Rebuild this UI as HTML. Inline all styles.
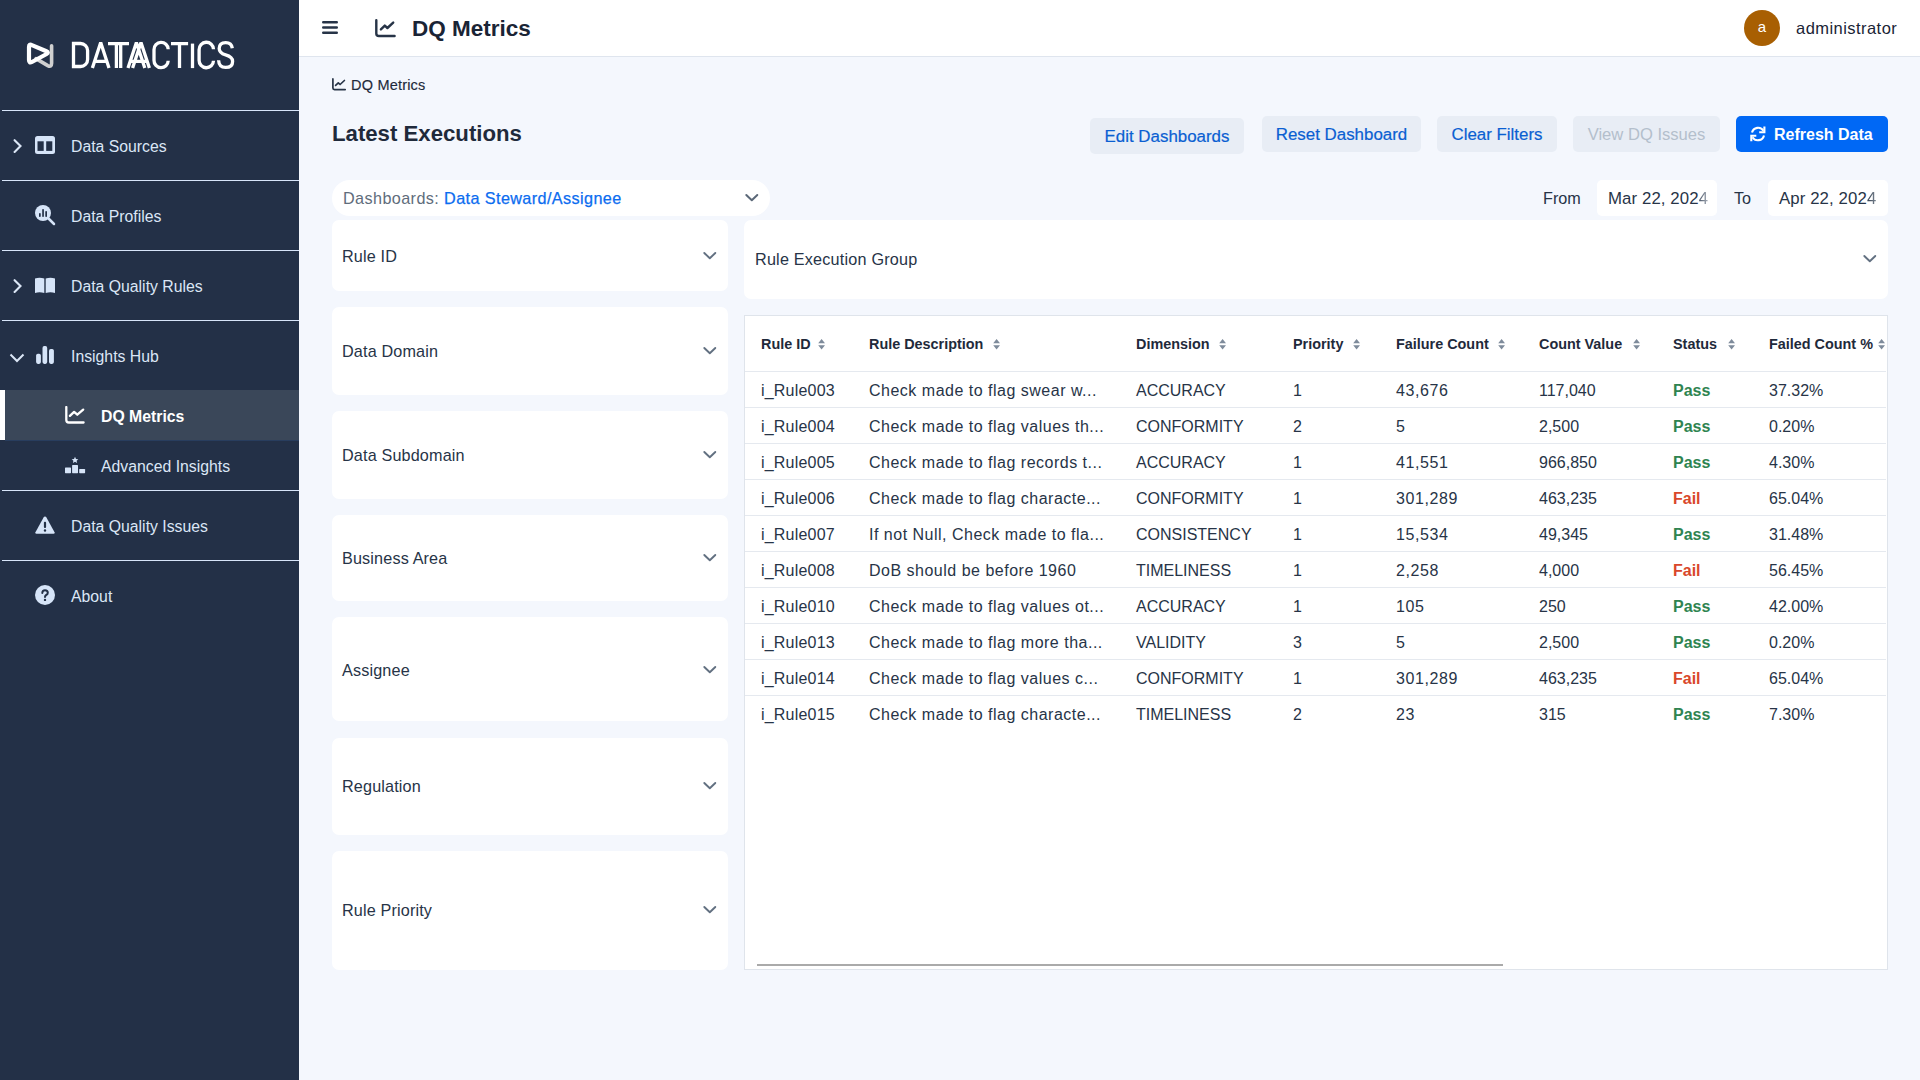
<!DOCTYPE html>
<html><head><meta charset="utf-8">
<style>
*{box-sizing:border-box;margin:0;padding:0}
html,body{width:1920px;height:1080px;overflow:hidden}
body{font-family:"Liberation Sans",sans-serif;background:#f4f7fd;color:#1e293b;position:relative}
.abs{position:absolute}
#side{position:absolute;left:0;top:0;width:299px;height:1080px;background:#233047}
.hr{position:absolute;left:2px;width:297px;height:1px;background:#d8e5fa}
.nav{position:absolute;left:71px;color:#dbe6f6;font-size:15.8px;white-space:nowrap;line-height:20px}
.ico{position:absolute}
#hdr{position:absolute;left:299px;top:0;width:1621px;height:57px;background:#fff;border-bottom:1px solid #dfe5ee}
.btn{position:absolute;height:36px;border-radius:5px;background:#e8edf5;color:#0a5fd2;font-size:16.9px;line-height:38px;-webkit-text-stroke:0.2px;text-align:center;white-space:nowrap}
.panel{position:absolute;background:#fff;border-radius:7px}
.plabel{position:absolute;left:10px;font-size:16px;color:#273447;white-space:nowrap;line-height:20px}
.chev{position:absolute}
.th{position:absolute;top:336px;font-size:14.4px;font-weight:700;color:#1f2a3b;white-space:nowrap;line-height:16px}
.td{position:absolute;font-size:16px;color:#273447;white-space:nowrap;line-height:20px}
.rowline{position:absolute;left:745px;width:1141px;height:1px;background:#e5e9ef}
</style></head><body>
<div id="side">
  <!-- logo -->
  <svg class="ico" style="left:20px;top:35px" width="40" height="36" viewBox="0 0 40 36">
    <path d="M31.6 10.8 V28.3 Q31.6 32.6 27.8 30.6 L16 23.6" fill="none" stroke="#d0d0d0" stroke-width="3.6" stroke-linecap="round" stroke-linejoin="round"/>
    <path d="M9 25 V12 Q9 8.6 11.9 10.1 L26.4 16.3 Q29.2 17.5 26.6 19 L11.9 27 Q9 28.6 9 25 Z" fill="none" stroke="#fff" stroke-width="4.2" stroke-linejoin="round"/>
  </svg>
  <svg class="ico" style="left:66px;top:36px" width="172" height="36" viewBox="0 0 172 36" fill="none" stroke="#fff" stroke-width="3.3" stroke-linejoin="bevel">
    <path stroke-linejoin="miter" d="M7.5 7.5 H14.6 A7 7 0 0 1 21.6 14.5 V23.5 A7 7 0 0 1 14.6 30.5 H7.5 Z"/>
    <path d="M26.4 32.1 L34.7 6.6 L43 32.1 M29.3 25.3 H40"/>
    <path d="M42 7.6 H63 M50.4 7.6 V32.1 M54.7 7.6 V32.1"/>
    <path d="M62 32.1 L70.4 6.6 L78.8 32.1 M66.6 32.1 L75 6.6 L83.4 32.1 M65 25.3 H80"/>
    <path d="M102.2 13.2 A7.1 7.1 0 0 0 88 13.7 V24.3 A7.1 7.1 0 0 0 102.2 24.8"/>
    <path d="M105 7.7 H122.1 M113.5 7.7 V32.1"/>
    <path d="M126.5 7.6 V32.1"/>
    <path d="M147.5 13.2 A7.2 7.2 0 0 0 133.1 13.7 V24.3 A7.2 7.2 0 0 0 147.5 24.8"/>
    <path d="M166.3 12.3 Q165.6 6.6 159.7 6.6 Q153.2 6.6 153.2 12.6 Q153.2 17.2 159.6 18.9 Q166.6 20.8 166.6 25.4 Q166.6 31.4 159.6 31.4 Q152.9 31.4 152.6 24.3"/>
  </svg>
  <div class="hr" style="top:110px"></div>
  <div class="hr" style="top:180px"></div>
  <div class="hr" style="top:250px"></div>
  <div class="hr" style="top:320px"></div>
  <div class="hr" style="top:490px"></div>
  <div class="hr" style="top:560px"></div>

  <!-- Data Sources -->
  <svg class="ico" style="left:12px;top:139px" width="12" height="16" viewBox="0 0 12 16"><path d="M2.6 1.2 L8.5 7.1 L2.6 13" fill="none" stroke="#dbe6f6" stroke-width="2.1" stroke-linecap="round"/></svg>
  <svg class="ico" style="left:35px;top:136px" width="20" height="18" viewBox="0 0 20 18"><rect x="0" y="0" width="20" height="18" rx="2.5" fill="#d6e4f8"/><rect x="2.5" y="5.3" width="6.2" height="9.6" fill="#233047"/><rect x="11.2" y="5.3" width="6.1" height="9.6" fill="#233047"/></svg>
  <div class="nav" style="top:137px">Data Sources</div>

  <!-- Data Profiles -->
  <svg class="ico" style="left:34px;top:204px" width="22" height="22" viewBox="0 0 22 22"><circle cx="9" cy="9" r="8" fill="#d6e4f8"/><path d="M14.5 14.5 L20 20" stroke="#d6e4f8" stroke-width="2.5" stroke-linecap="round"/><rect x="5" y="9" width="1.7" height="4" rx="0.8" fill="#233047"/><rect x="8.2" y="5" width="1.7" height="8" rx="0.8" fill="#233047"/><rect x="11.3" y="7" width="1.7" height="6" rx="0.8" fill="#233047"/></svg>
  <div class="nav" style="top:207px">Data Profiles</div>

  <!-- Data Quality Rules -->
  <svg class="ico" style="left:12px;top:279px" width="12" height="16" viewBox="0 0 12 16"><path d="M2.6 1.2 L8.5 7.1 L2.6 13" fill="none" stroke="#dbe6f6" stroke-width="2.1" stroke-linecap="round"/></svg>
  <svg class="ico" style="left:35px;top:277px" width="20" height="17" viewBox="0 0 20 17"><path d="M0 1.5 Q4.5 0 9.3 1.5 L9.3 16 Q4.5 14.5 0 16 Z" fill="#d6e4f8"/><path d="M10.7 1.5 Q15.5 0 20 1.5 L20 16 Q15.5 14.5 10.7 16 Z" fill="#d6e4f8"/></svg>
  <div class="nav" style="top:277px">Data Quality Rules</div>

  <!-- Insights Hub -->
  <svg class="ico" style="left:9px;top:352px" width="16" height="12" viewBox="0 0 16 12"><path d="M1.5 2.5 L8 9 L14.5 2.5" fill="none" stroke="#dbe6f6" stroke-width="2"/></svg>
  <svg class="ico" style="left:36px;top:346px" width="18" height="18" viewBox="0 0 18 18"><rect x="0.1" y="7.8" width="4.8" height="10.1" rx="1.8" fill="#d6e4f8"/><rect x="6.5" y="0.1" width="4.7" height="17.8" rx="1.8" fill="#d6e4f8"/><rect x="13" y="2.9" width="4.9" height="15" rx="1.8" fill="#d6e4f8"/></svg>
  <div class="nav" style="top:347px">Insights Hub</div>

  <!-- DQ Metrics active -->
  <div class="abs" style="left:5px;top:390px;width:294px;height:50px;background:#3a4759"></div>
  <div class="abs" style="left:0;top:390px;width:5px;height:50px;background:#fff"></div>
  <div class="abs" style="left:5px;top:440px;width:294px;height:1px;background:#283d5e"></div>
  <svg class="ico" style="left:65px;top:406px" width="21" height="19" viewBox="0 0 21 19"><path d="M1.3 1.1 V14 Q1.3 16.5 3.8 16.5 H18.6" fill="none" stroke="#fff" stroke-width="2.3" stroke-linecap="round"/><path d="M4.9 9.9 L9.1 5.9 L12.3 8.7 L18.2 3.6" fill="none" stroke="#fff" stroke-width="2.3" stroke-linecap="round" stroke-linejoin="round"/></svg>
  <div class="nav" style="left:101px;top:407px;color:#fff;font-weight:700">DQ Metrics</div>

  <!-- Advanced Insights -->
  <svg class="ico" style="left:65px;top:456px" width="21" height="18" viewBox="0 0 21 18"><rect x="0" y="11.4" width="6" height="5.8" rx="0.6" fill="#d6e4f8"/><rect x="7.1" y="9" width="5.9" height="8.2" rx="0.6" fill="#d6e4f8"/><rect x="14.2" y="13" width="5.9" height="4.2" rx="0.6" fill="#d6e4f8"/><path d="M10 0.8 L11 3 L13.3 3.2 L11.6 4.7 L12.1 7 L10 5.8 L7.9 7 L8.4 4.7 L6.7 3.2 L9 3 Z" fill="#d6e4f8"/></svg>
  <div class="nav" style="left:101px;top:457px">Advanced Insights</div>

  <!-- Data Quality Issues -->
  <svg class="ico" style="left:35px;top:516px" width="20" height="18.3" viewBox="0 0 22 19" preserveAspectRatio="none"><path d="M11 0.5 Q12 0.5 12.6 1.5 L21.5 16.8 Q22 18.5 20.3 18.5 L1.7 18.5 Q0 18.5 0.5 16.8 L9.4 1.5 Q10 0.5 11 0.5 Z" fill="#d6e4f8"/><rect x="9.8" y="6" width="2.4" height="6.5" rx="1" fill="#233047"/><circle cx="11" cy="15" r="1.3" fill="#233047"/></svg>
  <div class="nav" style="top:517px">Data Quality Issues</div>

  <!-- About -->
  <svg class="ico" style="left:35px;top:585px" width="20" height="20" viewBox="0 0 20 20"><circle cx="10" cy="10" r="10" fill="#d6e4f8"/><path d="M7.3 8 Q7.3 5.2 10 5.2 Q12.8 5.2 12.8 7.7 Q12.8 9.3 11.2 10 Q10 10.6 10 12" fill="none" stroke="#233047" stroke-width="2" stroke-linecap="round"/><circle cx="10" cy="14.9" r="1.2" fill="#233047"/></svg>
  <div class="nav" style="top:587px">About</div>
</div>

<div id="hdr">
  <svg class="ico" style="left:23px;top:21px" width="16" height="14" viewBox="0 0 16 14"><path d="M1.2 1.3 H14.8 M1.2 6.5 H14.8 M1.2 11.8 H14.8" stroke="#273447" stroke-width="2.4" stroke-linecap="round"/></svg>
  <svg class="ico" style="left:76px;top:18px" width="22" height="20" viewBox="0 0 22 20"><path d="M1.3 2.3 V15.4 Q1.3 18 3.9 18 H19.6" fill="none" stroke="#273447" stroke-width="2.4" stroke-linecap="round"/><path d="M5.9 11.4 L9.8 7.6 L12.4 10 L18.2 4.6" fill="none" stroke="#273447" stroke-width="2.4" stroke-linecap="round" stroke-linejoin="round"/></svg>
  <div class="abs" style="left:113px;top:16px;font-size:22.5px;font-weight:700;color:#1a2435;line-height:26px;white-space:nowrap">DQ Metrics</div>
  <div class="abs" style="left:1445px;top:10px;width:36px;height:36px;border-radius:50%;background:#a85f02;color:#fff;font-size:15px;line-height:34px;text-align:center">a</div>
  <div class="abs" style="left:1497px;top:18px;font-size:16.5px;letter-spacing:0.45px;color:#1a2435;line-height:20px;white-space:nowrap">administrator</div>
</div>

<!-- breadcrumb -->
<svg class="ico" style="left:332px;top:78px" width="15" height="13" viewBox="0 0 15 13"><path d="M0.9 0.9 V10 Q0.9 11.6 2.5 11.6 H13.2" fill="none" stroke="#273447" stroke-width="1.7" stroke-linecap="round"/><path d="M3.6 7.4 L6.3 4.8 L8.1 6.5 L12.4 2.5" fill="none" stroke="#273447" stroke-width="1.7" stroke-linecap="round" stroke-linejoin="round"/></svg>
<div class="abs" style="left:351px;top:77px;font-size:14.5px;color:#1f2a3b;line-height:16px;white-space:nowrap;letter-spacing:0.2px;-webkit-text-stroke:0.15px">DQ Metrics</div>
<div class="abs" style="left:332px;top:121px;font-size:22.2px;font-weight:700;color:#1f2a3b;line-height:26px;white-space:nowrap">Latest Executions</div>

<!-- buttons -->
<div class="btn" style="left:1090px;top:118px;width:154px">Edit Dashboards</div>
<div class="btn" style="left:1262px;top:116px;width:159px">Reset Dashboard</div>
<div class="btn" style="left:1437px;top:116px;width:120px">Clear Filters</div>
<div class="btn" style="left:1573px;top:116px;width:147px;color:#b4bfcc;font-size:16.6px;-webkit-text-stroke:0px">View DQ Issues</div>
<div class="btn" style="left:1736px;top:116px;width:152px;background:#0068f5;color:#fff;font-weight:700;font-size:16px;-webkit-text-stroke:0px;text-align:left;padding-left:38px">Refresh Data</div>
<svg class="ico" style="left:1750px;top:126px" width="16" height="16" viewBox="0 0 16 16" fill="none" stroke="#fff" stroke-width="2.1"><path d="M2 6.6 A6.3 6.3 0 0 1 13.5 4.8"/><path d="M14.4 0.6 V6.3 H9.2" stroke-linejoin="miter"/><path d="M14 9.4 A6.3 6.3 0 0 1 2.5 11.2"/><path d="M1.3 15.2 V9.8 H6.3" stroke-linejoin="miter"/></svg>

<!-- dashboards select -->
<div class="abs" style="left:332px;top:180px;width:438px;height:36px;border-radius:18px;background:#fff"></div>
<div class="abs" style="left:343px;top:188px;font-size:16.2px;color:#606c7b;line-height:20px;white-space:nowrap;letter-spacing:0.4px">Dashboards: <span style="color:#0b6cf0;-webkit-text-stroke:0.25px">Data Steward/Assignee</span></div>
<svg class="ico" style="left:744px;top:192px" width="16" height="12" viewBox="0 0 16 12"><path d="M2.3 3 L7.8 8.3 L13.3 3" fill="none" stroke="#5b6878" stroke-width="2" stroke-linecap="round" stroke-linejoin="round"/></svg>

<!-- from/to -->
<div class="abs" style="left:1543px;top:188px;font-size:16.2px;color:#273447;line-height:20px">From</div>
<div class="abs" style="left:1597px;top:180px;width:120px;height:36px;border-radius:5px;background:#fff"></div>
<div class="abs" style="left:1608px;top:189px;font-size:16.8px;color:#273447;line-height:20px;white-space:nowrap;letter-spacing:0.1px">Mar 22, 202<span style="background:linear-gradient(90deg,#4a5668,#a9b0ba);-webkit-background-clip:text;background-clip:text;color:transparent">4</span></div>
<div class="abs" style="left:1734px;top:188px;font-size:16.2px;color:#273447;line-height:20px">To</div>
<div class="abs" style="left:1768px;top:180px;width:120px;height:36px;border-radius:5px;background:#fff"></div>
<div class="abs" style="left:1779px;top:189px;font-size:16.8px;color:#273447;line-height:20px;white-space:nowrap;letter-spacing:0.1px">Apr 22, 202<span style="background:linear-gradient(90deg,#2d3a4b,#7f8995);-webkit-background-clip:text;background-clip:text;color:transparent">4</span></div>

<!-- filter panels -->
<div class="panel" style="left:332px;top:220px;width:396px;height:71px"></div>
<div class="abs" style="left:342px;top:246px;font-size:16.2px;color:#273447;line-height:20px;white-space:nowrap;letter-spacing:0.15px">Rule ID</div>
<svg class="ico" style="left:702px;top:250px" width="16" height="12" viewBox="0 0 16 12"><path d="M2.3 3 L7.8 8.3 L13.3 3" fill="none" stroke="#627081" stroke-width="1.9" stroke-linecap="round" stroke-linejoin="round"/></svg>
<div class="panel" style="left:332px;top:307px;width:396px;height:88px"></div>
<div class="abs" style="left:342px;top:341px;font-size:16.2px;color:#273447;line-height:20px;white-space:nowrap;letter-spacing:0.15px">Data Domain</div>
<svg class="ico" style="left:702px;top:345px" width="16" height="12" viewBox="0 0 16 12"><path d="M2.3 3 L7.8 8.3 L13.3 3" fill="none" stroke="#627081" stroke-width="1.9" stroke-linecap="round" stroke-linejoin="round"/></svg>
<div class="panel" style="left:332px;top:411px;width:396px;height:88px"></div>
<div class="abs" style="left:342px;top:445px;font-size:16.2px;color:#273447;line-height:20px;white-space:nowrap;letter-spacing:0.15px">Data Subdomain</div>
<svg class="ico" style="left:702px;top:449px" width="16" height="12" viewBox="0 0 16 12"><path d="M2.3 3 L7.8 8.3 L13.3 3" fill="none" stroke="#627081" stroke-width="1.9" stroke-linecap="round" stroke-linejoin="round"/></svg>
<div class="panel" style="left:332px;top:515px;width:396px;height:86px"></div>
<div class="abs" style="left:342px;top:548px;font-size:16.2px;color:#273447;line-height:20px;white-space:nowrap;letter-spacing:0.15px">Business Area</div>
<svg class="ico" style="left:702px;top:552px" width="16" height="12" viewBox="0 0 16 12"><path d="M2.3 3 L7.8 8.3 L13.3 3" fill="none" stroke="#627081" stroke-width="1.9" stroke-linecap="round" stroke-linejoin="round"/></svg>
<div class="panel" style="left:332px;top:617px;width:396px;height:104px"></div>
<div class="abs" style="left:342px;top:660px;font-size:16.2px;color:#273447;line-height:20px;white-space:nowrap;letter-spacing:0.15px">Assignee</div>
<svg class="ico" style="left:702px;top:664px" width="16" height="12" viewBox="0 0 16 12"><path d="M2.3 3 L7.8 8.3 L13.3 3" fill="none" stroke="#627081" stroke-width="1.9" stroke-linecap="round" stroke-linejoin="round"/></svg>
<div class="panel" style="left:332px;top:738px;width:396px;height:97px"></div>
<div class="abs" style="left:342px;top:776px;font-size:16.2px;color:#273447;line-height:20px;white-space:nowrap;letter-spacing:0.15px">Regulation</div>
<svg class="ico" style="left:702px;top:780px" width="16" height="12" viewBox="0 0 16 12"><path d="M2.3 3 L7.8 8.3 L13.3 3" fill="none" stroke="#627081" stroke-width="1.9" stroke-linecap="round" stroke-linejoin="round"/></svg>
<div class="panel" style="left:332px;top:851px;width:396px;height:119px"></div>
<div class="abs" style="left:342px;top:900px;font-size:16.2px;color:#273447;line-height:20px;white-space:nowrap;letter-spacing:0.15px">Rule Priority</div>
<svg class="ico" style="left:702px;top:904px" width="16" height="12" viewBox="0 0 16 12"><path d="M2.3 3 L7.8 8.3 L13.3 3" fill="none" stroke="#627081" stroke-width="1.9" stroke-linecap="round" stroke-linejoin="round"/></svg>
<div class="panel" style="left:744px;top:220px;width:1144px;height:79px"></div>
<div class="abs" style="left:755px;top:249px;font-size:16.2px;color:#273447;line-height:20px;white-space:nowrap;letter-spacing:0.2px">Rule Execution Group</div>
<svg class="ico" style="left:1862px;top:253px" width="16" height="12" viewBox="0 0 16 12"><path d="M2.3 3 L7.8 8.3 L13.3 3" fill="none" stroke="#627081" stroke-width="1.9" stroke-linecap="round" stroke-linejoin="round"/></svg>

<!-- table -->
<div class="abs" style="left:744px;top:315px;width:1144px;height:655px;background:#fff;border:1px solid #dfe4eb"></div>
<div class="th" style="left:761px">Rule ID</div><svg class="ico" style="left:818px;top:339px" width="8" height="12" viewBox="0 0 8 12"><path d="M0.2 4.2 L3.6 0 L7 4.2 Z M0.2 6.2 L3.6 10.6 L7 6.2 Z" fill="#7e8b9b"/></svg>
<div class="th" style="left:869px">Rule Description</div><svg class="ico" style="left:993px;top:339px" width="8" height="12" viewBox="0 0 8 12"><path d="M0.2 4.2 L3.6 0 L7 4.2 Z M0.2 6.2 L3.6 10.6 L7 6.2 Z" fill="#7e8b9b"/></svg>
<div class="th" style="left:1136px">Dimension</div><svg class="ico" style="left:1219px;top:339px" width="8" height="12" viewBox="0 0 8 12"><path d="M0.2 4.2 L3.6 0 L7 4.2 Z M0.2 6.2 L3.6 10.6 L7 6.2 Z" fill="#7e8b9b"/></svg>
<div class="th" style="left:1293px">Priority</div><svg class="ico" style="left:1353px;top:339px" width="8" height="12" viewBox="0 0 8 12"><path d="M0.2 4.2 L3.6 0 L7 4.2 Z M0.2 6.2 L3.6 10.6 L7 6.2 Z" fill="#7e8b9b"/></svg>
<div class="th" style="left:1396px">Failure Count</div><svg class="ico" style="left:1498px;top:339px" width="8" height="12" viewBox="0 0 8 12"><path d="M0.2 4.2 L3.6 0 L7 4.2 Z M0.2 6.2 L3.6 10.6 L7 6.2 Z" fill="#7e8b9b"/></svg>
<div class="th" style="left:1539px">Count Value</div><svg class="ico" style="left:1633px;top:339px" width="8" height="12" viewBox="0 0 8 12"><path d="M0.2 4.2 L3.6 0 L7 4.2 Z M0.2 6.2 L3.6 10.6 L7 6.2 Z" fill="#7e8b9b"/></svg>
<div class="th" style="left:1673px">Status</div><svg class="ico" style="left:1728px;top:339px" width="8" height="12" viewBox="0 0 8 12"><path d="M0.2 4.2 L3.6 0 L7 4.2 Z M0.2 6.2 L3.6 10.6 L7 6.2 Z" fill="#7e8b9b"/></svg>
<div class="th" style="left:1769px">Failed Count %</div><svg class="ico" style="left:1878px;top:339px" width="8" height="12" viewBox="0 0 8 12"><path d="M0.2 4.2 L3.6 0 L7 4.2 Z M0.2 6.2 L3.6 10.6 L7 6.2 Z" fill="#7e8b9b"/></svg>
<div class="rowline" style="top:371px"></div>
<div class="rowline" style="top:407px"></div>
<div class="rowline" style="top:443px"></div>
<div class="rowline" style="top:479px"></div>
<div class="rowline" style="top:515px"></div>
<div class="rowline" style="top:551px"></div>
<div class="rowline" style="top:587px"></div>
<div class="rowline" style="top:623px"></div>
<div class="rowline" style="top:659px"></div>
<div class="rowline" style="top:695px"></div>
<div class="td" style="left:761px;top:381px;letter-spacing:0.2px">i_Rule003</div><div class="td" style="left:869px;top:381px;letter-spacing:0.5px">Check made to flag swear w...</div><div class="td" style="left:1136px;top:381px">ACCURACY</div><div class="td" style="left:1293px;top:381px">1</div><div class="td" style="left:1396px;top:381px;letter-spacing:0.6px">43,676</div><div class="td" style="left:1539px;top:381px">117,040</div><div class="td" style="left:1673px;top:381px;font-weight:700;color:#2f8450">Pass</div><div class="td" style="left:1769px;top:381px">37.32%</div>
<div class="td" style="left:761px;top:417px;letter-spacing:0.2px">i_Rule004</div><div class="td" style="left:869px;top:417px;letter-spacing:0.5px">Check made to flag values th...</div><div class="td" style="left:1136px;top:417px">CONFORMITY</div><div class="td" style="left:1293px;top:417px">2</div><div class="td" style="left:1396px;top:417px;letter-spacing:0.6px">5</div><div class="td" style="left:1539px;top:417px">2,500</div><div class="td" style="left:1673px;top:417px;font-weight:700;color:#2f8450">Pass</div><div class="td" style="left:1769px;top:417px">0.20%</div>
<div class="td" style="left:761px;top:453px;letter-spacing:0.2px">i_Rule005</div><div class="td" style="left:869px;top:453px;letter-spacing:0.5px">Check made to flag records t...</div><div class="td" style="left:1136px;top:453px">ACCURACY</div><div class="td" style="left:1293px;top:453px">1</div><div class="td" style="left:1396px;top:453px;letter-spacing:0.6px">41,551</div><div class="td" style="left:1539px;top:453px">966,850</div><div class="td" style="left:1673px;top:453px;font-weight:700;color:#2f8450">Pass</div><div class="td" style="left:1769px;top:453px">4.30%</div>
<div class="td" style="left:761px;top:489px;letter-spacing:0.2px">i_Rule006</div><div class="td" style="left:869px;top:489px;letter-spacing:0.5px">Check made to flag characte...</div><div class="td" style="left:1136px;top:489px">CONFORMITY</div><div class="td" style="left:1293px;top:489px">1</div><div class="td" style="left:1396px;top:489px;letter-spacing:0.6px">301,289</div><div class="td" style="left:1539px;top:489px">463,235</div><div class="td" style="left:1673px;top:489px;font-weight:700;color:#d9472b">Fail</div><div class="td" style="left:1769px;top:489px">65.04%</div>
<div class="td" style="left:761px;top:525px;letter-spacing:0.2px">i_Rule007</div><div class="td" style="left:869px;top:525px;letter-spacing:0.5px">If not Null, Check made to fla...</div><div class="td" style="left:1136px;top:525px">CONSISTENCY</div><div class="td" style="left:1293px;top:525px">1</div><div class="td" style="left:1396px;top:525px;letter-spacing:0.6px">15,534</div><div class="td" style="left:1539px;top:525px">49,345</div><div class="td" style="left:1673px;top:525px;font-weight:700;color:#2f8450">Pass</div><div class="td" style="left:1769px;top:525px">31.48%</div>
<div class="td" style="left:761px;top:561px;letter-spacing:0.2px">i_Rule008</div><div class="td" style="left:869px;top:561px;letter-spacing:0.5px">DoB should be before 1960</div><div class="td" style="left:1136px;top:561px">TIMELINESS</div><div class="td" style="left:1293px;top:561px">1</div><div class="td" style="left:1396px;top:561px;letter-spacing:0.6px">2,258</div><div class="td" style="left:1539px;top:561px">4,000</div><div class="td" style="left:1673px;top:561px;font-weight:700;color:#d9472b">Fail</div><div class="td" style="left:1769px;top:561px">56.45%</div>
<div class="td" style="left:761px;top:597px;letter-spacing:0.2px">i_Rule010</div><div class="td" style="left:869px;top:597px;letter-spacing:0.5px">Check made to flag values ot...</div><div class="td" style="left:1136px;top:597px">ACCURACY</div><div class="td" style="left:1293px;top:597px">1</div><div class="td" style="left:1396px;top:597px;letter-spacing:0.6px">105</div><div class="td" style="left:1539px;top:597px">250</div><div class="td" style="left:1673px;top:597px;font-weight:700;color:#2f8450">Pass</div><div class="td" style="left:1769px;top:597px">42.00%</div>
<div class="td" style="left:761px;top:633px;letter-spacing:0.2px">i_Rule013</div><div class="td" style="left:869px;top:633px;letter-spacing:0.5px">Check made to flag more tha...</div><div class="td" style="left:1136px;top:633px">VALIDITY</div><div class="td" style="left:1293px;top:633px">3</div><div class="td" style="left:1396px;top:633px;letter-spacing:0.6px">5</div><div class="td" style="left:1539px;top:633px">2,500</div><div class="td" style="left:1673px;top:633px;font-weight:700;color:#2f8450">Pass</div><div class="td" style="left:1769px;top:633px">0.20%</div>
<div class="td" style="left:761px;top:669px;letter-spacing:0.2px">i_Rule014</div><div class="td" style="left:869px;top:669px;letter-spacing:0.5px">Check made to flag values c...</div><div class="td" style="left:1136px;top:669px">CONFORMITY</div><div class="td" style="left:1293px;top:669px">1</div><div class="td" style="left:1396px;top:669px;letter-spacing:0.6px">301,289</div><div class="td" style="left:1539px;top:669px">463,235</div><div class="td" style="left:1673px;top:669px;font-weight:700;color:#d9472b">Fail</div><div class="td" style="left:1769px;top:669px">65.04%</div>
<div class="td" style="left:761px;top:705px;letter-spacing:0.2px">i_Rule015</div><div class="td" style="left:869px;top:705px;letter-spacing:0.5px">Check made to flag characte...</div><div class="td" style="left:1136px;top:705px">TIMELINESS</div><div class="td" style="left:1293px;top:705px">2</div><div class="td" style="left:1396px;top:705px;letter-spacing:0.6px">23</div><div class="td" style="left:1539px;top:705px">315</div><div class="td" style="left:1673px;top:705px;font-weight:700;color:#2f8450">Pass</div><div class="td" style="left:1769px;top:705px">7.30%</div>
<div class="abs" style="left:757px;top:964px;width:746px;height:2px;background:#aaaaaa"></div>

</body></html>
